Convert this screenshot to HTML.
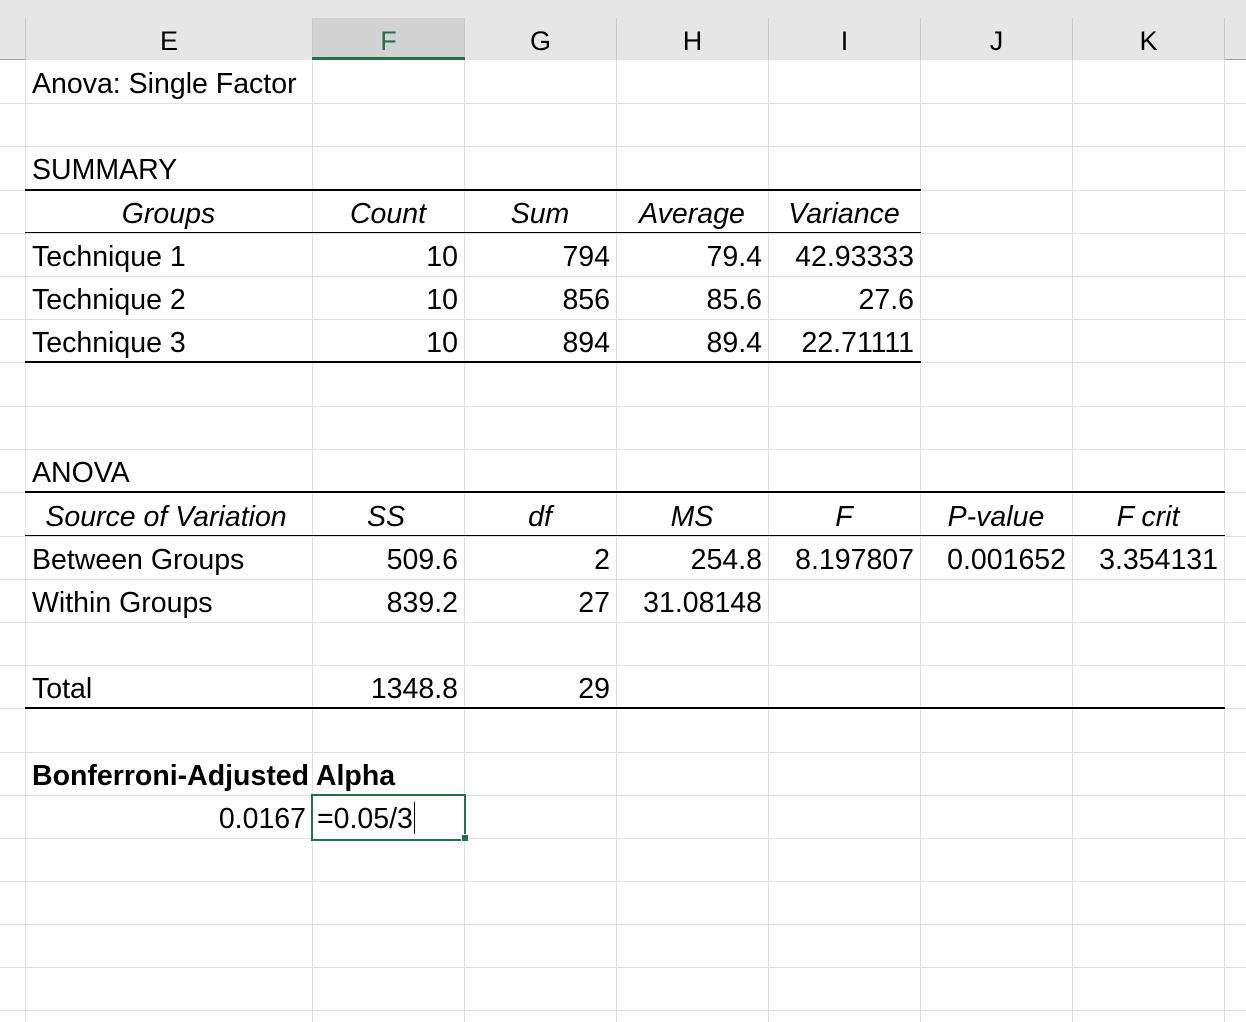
<!DOCTYPE html><html><head><style>
body{margin:0;width:1246px;height:1022px;overflow:hidden;background:#fff;font-family:"Liberation Sans",Arial,sans-serif;position:relative}
.a{position:absolute}
.hl{position:absolute;left:0;width:1246px;height:1px;background:#e1e1e1}
.vl{position:absolute;top:60px;height:962px;width:1px;background:#e1e1e1}
.c{position:absolute;height:43px;line-height:46px;font-size:28.5px;color:#000;white-space:nowrap}
.r{text-align:right}.m{text-align:center}.i{font-style:italic}
.bk{position:absolute;height:2px;background:#000}
.h{position:absolute;top:18px;height:42px;line-height:46px;text-align:center;font-size:27px;background:#e6e6e6;border-right:1px solid #c8c8c8}
</style></head><body>
<div class="a" style="left:0;top:0;width:1246px;height:60px;background:#e6e6e6"></div>
<div class="a" style="left:0;top:59px;width:1246px;height:1px;background:#9e9e9e"></div>
<div class="a" style="left:25px;top:18px;width:1px;height:42px;background:#c8c8c8"></div>
<div class="h" style="left:26px;width:286px">E</div>
<div class="h" style="left:313px;width:151px;background:#d2d2d2;color:#217346">F</div>
<div class="a" style="left:312px;top:57px;width:153px;height:3px;background:#217346"></div>
<div class="h" style="left:465px;width:151px">G</div>
<div class="h" style="left:617px;width:151px">H</div>
<div class="h" style="left:769px;width:151px">I</div>
<div class="h" style="left:921px;width:151px">J</div>
<div class="h" style="left:1073px;width:151px">K</div>
<div class="vl" style="left:25px"></div><div class="vl" style="left:312px"></div><div class="vl" style="left:464px"></div><div class="vl" style="left:616px"></div><div class="vl" style="left:768px"></div><div class="vl" style="left:920px"></div><div class="vl" style="left:1072px"></div><div class="vl" style="left:1224px"></div>
<div class="hl" style="top:103px"></div><div class="hl" style="top:146px"></div><div class="hl" style="top:190px"></div><div class="hl" style="top:233px"></div><div class="hl" style="top:276px"></div><div class="hl" style="top:319px"></div><div class="hl" style="top:362px"></div><div class="hl" style="top:406px"></div><div class="hl" style="top:449px"></div><div class="hl" style="top:492px"></div><div class="hl" style="top:536px"></div><div class="hl" style="top:579px"></div><div class="hl" style="top:622px"></div><div class="hl" style="top:665px"></div><div class="hl" style="top:708px"></div><div class="hl" style="top:752px"></div><div class="hl" style="top:795px"></div><div class="hl" style="top:838px"></div><div class="hl" style="top:881px"></div><div class="hl" style="top:924px"></div><div class="hl" style="top:967px"></div><div class="hl" style="top:1010px"></div>
<div class="bk" style="left:25px;top:189px;width:896px"></div>
<div class="bk" style="left:25px;top:232px;width:896px;height:1px"></div>
<div class="bk" style="left:25px;top:361px;width:896px"></div>
<div class="bk" style="left:25px;top:491px;width:1200px"></div>
<div class="bk" style="left:25px;top:535px;width:1200px;height:1px"></div>
<div class="bk" style="left:25px;top:707px;width:1200px"></div>

<div class="c" style="left:32px;top:61px">Anova: Single Factor</div>
<div class="c" style="left:32px;top:147px">SUMMARY</div>
<div class="c m i" style="left:25px;width:287px;top:191px">Groups</div>
<div class="c m i" style="left:312px;width:152px;top:191px">Count</div>
<div class="c m i" style="left:464px;width:152px;top:191px">Sum</div>
<div class="c m i" style="left:616px;width:152px;top:191px">Average</div>
<div class="c m i" style="left:768px;width:152px;top:191px">Variance</div>

<div class="c" style="left:32px;top:234px">Technique 1</div>
<div class="c r" style="left:312px;width:146px;top:234px">10</div>
<div class="c r" style="left:464px;width:146px;top:234px">794</div>
<div class="c r" style="left:616px;width:146px;top:234px">79.4</div>
<div class="c r" style="left:768px;width:146px;top:234px">42.93333</div>
<div class="c" style="left:32px;top:277px">Technique 2</div>
<div class="c r" style="left:312px;width:146px;top:277px">10</div>
<div class="c r" style="left:464px;width:146px;top:277px">856</div>
<div class="c r" style="left:616px;width:146px;top:277px">85.6</div>
<div class="c r" style="left:768px;width:146px;top:277px">27.6</div>
<div class="c" style="left:32px;top:320px">Technique 3</div>
<div class="c r" style="left:312px;width:146px;top:320px">10</div>
<div class="c r" style="left:464px;width:146px;top:320px">894</div>
<div class="c r" style="left:616px;width:146px;top:320px">89.4</div>
<div class="c r" style="left:768px;width:146px;top:320px">22.71111</div>

<div class="c" style="left:32px;top:450px">ANOVA</div>
<div class="c m i" style="left:25px;width:282px;top:494px">Source of Variation</div>
<div class="c m i" style="left:312px;width:148px;top:494px">SS</div>
<div class="c m i" style="left:464px;width:152px;top:494px">df</div>
<div class="c m i" style="left:616px;width:152px;top:494px">MS</div>
<div class="c m i" style="left:768px;width:152px;top:494px">F</div>
<div class="c m i" style="left:920px;width:152px;top:494px">P-value</div>
<div class="c m i" style="left:1072px;width:152px;top:494px">F crit</div>

<div class="c" style="left:32px;top:537px">Between Groups</div>
<div class="c r" style="left:312px;width:146px;top:537px">509.6</div>
<div class="c r" style="left:464px;width:146px;top:537px">2</div>
<div class="c r" style="left:616px;width:146px;top:537px">254.8</div>
<div class="c r" style="left:768px;width:146px;top:537px">8.197807</div>
<div class="c r" style="left:920px;width:146px;top:537px">0.001652</div>
<div class="c r" style="left:1072px;width:146px;top:537px">3.354131</div>
<div class="c" style="left:32px;top:580px">Within Groups</div>
<div class="c r" style="left:312px;width:146px;top:580px">839.2</div>
<div class="c r" style="left:464px;width:146px;top:580px">27</div>
<div class="c r" style="left:616px;width:146px;top:580px">31.08148</div>
<div class="c" style="left:32px;top:666px">Total</div>
<div class="c r" style="left:312px;width:146px;top:666px">1348.8</div>
<div class="c r" style="left:464px;width:146px;top:666px">29</div>

<div class="c" style="left:32px;top:753px;font-weight:bold">Bonferroni-Adjusted Alpha</div>
<div class="c r" style="left:25px;width:281px;top:796px">0.0167</div>
<div class="a" style="left:311px;top:794px;width:151px;height:43px;border:2px solid #217346;background:#fff"></div>
<div class="a" style="left:461px;top:834px;width:6px;height:6px;background:#217346;border:1px solid #fff"></div>
<div class="c" style="left:317px;top:796px">=0.05/3<span style="display:inline-block;width:1px;height:32px;background:#000;vertical-align:-6px;margin-left:1px"></span></div>
</body></html>
